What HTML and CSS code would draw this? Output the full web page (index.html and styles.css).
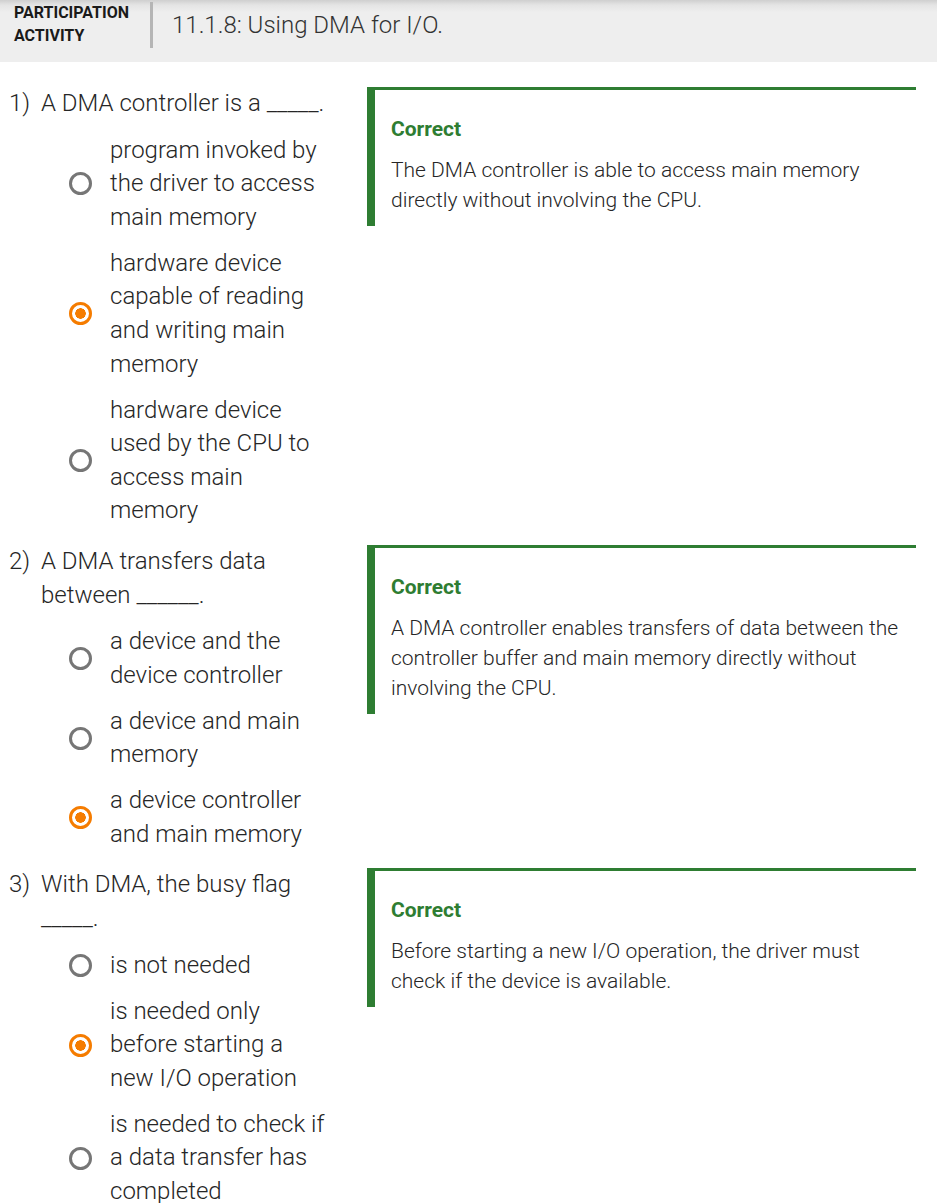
FILE: index.html
```html
<!DOCTYPE html>
<html lang="en">
<head>
<meta charset="utf-8">
<title>Participation Activity</title>
<link rel="stylesheet" href="styles.css">
</head>
<body>
<header class="activity-header">
  <div class="activity-label">PARTICIPATION<br>ACTIVITY</div>
  <div class="header-divider"></div>
  <h1 class="activity-title">11.1.8: Using DMA for I/O.</h1>
</header>
<main class="questions">
  <section class="question">
    <div class="q-left">
      <div class="q-prompt"><span class="q-num">1)</span><span class="q-text">A DMA controller is a _____.</span></div>
      <ul class="options">
        <li class="option"><span class="radio"></span><span class="opt-text">program invoked by the driver to access main memory</span></li>
        <li class="option"><span class="radio selected"></span><span class="opt-text">hardware device capable of reading and writing main memory</span></li>
        <li class="option"><span class="radio"></span><span class="opt-text">hardware device used by the CPU to access main memory</span></li>
      </ul>
    </div>
    <div class="feedback">
      <div class="fb-title">Correct</div>
      <p class="fb-text">The DMA controller is able to access main memory directly without involving the CPU.</p>
    </div>
  </section>
  <section class="question">
    <div class="q-left">
      <div class="q-prompt"><span class="q-num">2)</span><span class="q-text">A DMA transfers data between ______.</span></div>
      <ul class="options">
        <li class="option"><span class="radio"></span><span class="opt-text">a device and the device controller</span></li>
        <li class="option"><span class="radio"></span><span class="opt-text">a device and main memory</span></li>
        <li class="option"><span class="radio selected"></span><span class="opt-text">a device controller and main memory</span></li>
      </ul>
    </div>
    <div class="feedback">
      <div class="fb-title">Correct</div>
      <p class="fb-text">A DMA controller enables transfers of data between the controller buffer and main memory directly without involving the CPU.</p>
    </div>
  </section>
  <section class="question">
    <div class="q-left">
      <div class="q-prompt"><span class="q-num">3)</span><span class="q-text">With DMA, the busy flag _____.</span></div>
      <ul class="options">
        <li class="option"><span class="radio"></span><span class="opt-text">is not needed</span></li>
        <li class="option"><span class="radio selected"></span><span class="opt-text">is needed only before starting a new I/O operation</span></li>
        <li class="option"><span class="radio"></span><span class="opt-text">is needed to check if a data transfer has completed</span></li>
      </ul>
    </div>
    <div class="feedback">
      <div class="fb-title">Correct</div>
      <p class="fb-text">Before starting a new I/O operation, the driver must check if the device is available.</p>
    </div>
  </section>
</main>
</body>
</html>
```

FILE: styles.css
```css
* { box-sizing: border-box; }

body {
  margin: 0;
  font-family: Roboto, "Liberation Sans", sans-serif;
  color: #262626;
  background: #fff;
}

.activity-header {
  display: flex;
  align-items: flex-start;
  height: 62px;
  background: #eeeeee;
  background-image: linear-gradient(to bottom, #cfcfcf 0px, #e4e4e4 5px, #eeeeee 12px);
}

.activity-label {
  font-weight: 700;
  font-size: 16px;
  line-height: 23px;
  color: #1a1a1a;
  padding: 1px 0 0 14px;
  width: 150px;
}

.header-divider {
  width: 3px;
  height: 46px;
  margin-top: 2px;
  background: #b5b5b5;
}

.activity-title {
  margin: 9px 0 0 19px;
  font-size: 24px;
  font-weight: 300;
  line-height: 32px;
  color: #333;
}

.questions {
  padding: 25px 21px 0 8px;
  display: flex;
  flex-direction: column;
  gap: 17px;
}

.question {
  display: grid;
  grid-template-columns: 323px 549px;
  column-gap: 36px;
  align-items: start;
}

.q-prompt {
  display: flex;
  font-size: 24px;
  font-weight: 300;
  line-height: 33.6px;
}

.q-num {
  width: 33px;
  flex: none;
  padding-left: 1px;
}

.options {
  list-style: none;
  margin: 13px 0 0 0;
  padding: 0 0 0 33px;
  display: flex;
  flex-direction: column;
  gap: 12.4px;
}

.option {
  display: flex;
  align-items: center;
  font-size: 24px;
  font-weight: 300;
  line-height: 33.6px;
}

.radio {
  flex: none;
  width: 23px;
  height: 23px;
  margin-left: 28px;
  margin-right: 18px;
  border: 3px solid #767676;
  border-radius: 50%;
  background: #fff;
}

.radio.selected {
  border-color: #f57c00;
  background: radial-gradient(circle, #f57c00 0 5px, #fff 5.5px);
}

.feedback {
  border-top: 3px solid #2e7d32;
  border-left: 8px solid #2e7d32;
  padding: 24px 16px 11px 16px;
}

.fb-title {
  color: #2e7d32;
  font-weight: 700;
  font-size: 21px;
  line-height: 30px;
}

.fb-text {
  margin: 11px 0 0 0;
  font-size: 21px;
  font-weight: 300;
  line-height: 30px;
}
```
